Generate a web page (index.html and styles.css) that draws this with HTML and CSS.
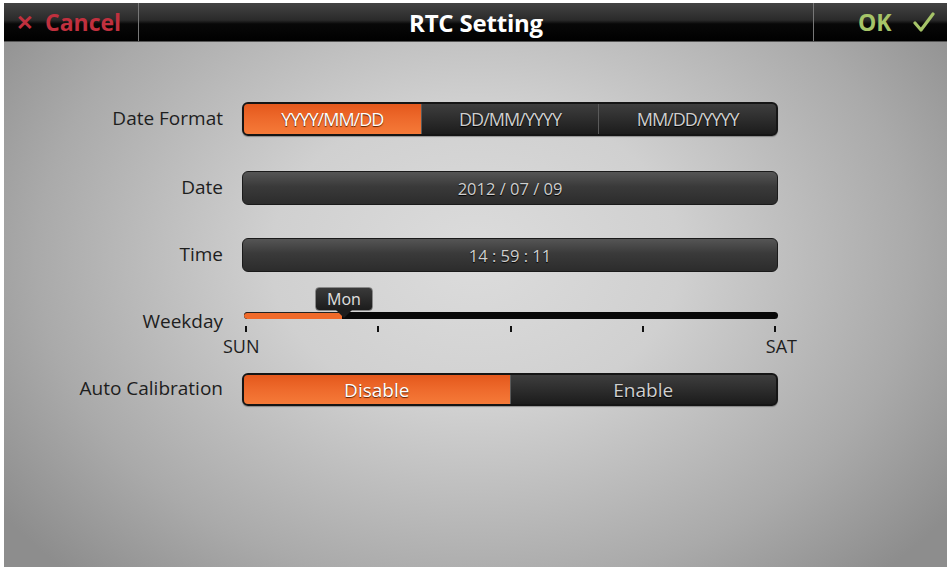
FILE: index.html
```html
<!DOCTYPE html>
<html>
<head>
<meta charset="utf-8">
<link rel="stylesheet" href="styles.css">
</head>
<body>
<div class="screen">
  <div class="header">
    <div class="hbtn cancel"><span class="x">✕</span> Cancel</div>
    <div class="title">RTC Setting</div>
    <div class="hbtn ok">OK <svg class="check" width="22" height="20" viewBox="0 0 22 20"><path d="M2 11 L8 18 L20 2" fill="none" stroke="#a6c468" stroke-width="3.2" stroke-linecap="round" stroke-linejoin="round"/></svg></div>
  </div>
  <div class="body">
    <div class="row r1">
      <div class="label">Date Format</div>
      <div class="seg three">
        <div class="opt on">YYYY/MM/DD</div>
        <div class="opt">DD/MM/YYYY</div>
        <div class="opt">MM/DD/YYYY</div>
      </div>
    </div>
    <div class="row r2">
      <div class="label">Date</div>
      <div class="field">2012 / 07 / 09</div>
    </div>
    <div class="row r3">
      <div class="label">Time</div>
      <div class="field">14 : 59 : 11</div>
    </div>
    <div class="row wk">
      <div class="label wklabel">Weekday</div>
      <div class="slider">
        <div class="tipzone">
          <div class="tip">Mon<span class="ptr"></span></div>
        </div>
        <div class="track"><div class="fill" style="width:98px"></div></div>
        <div class="ticks"><i></i><i></i><i></i><i></i><i></i></div>
        <div class="ends"><span>SUN</span><span>SAT</span></div>
      </div>
    </div>
    <div class="row r5">
      <div class="label">Auto Calibration</div>
      <div class="seg two">
        <div class="opt on">Disable</div>
        <div class="opt">Enable</div>
      </div>
    </div>
  </div>
</div>
</body>
</html>
```
FILE: styles.css
```css
html, body { margin: 0; padding: 0; background: #fff; }
body { font-family: "Open Sans", "Noto Sans", sans-serif; }
.screen {
  margin: 3px 0 0 4px;
  width: 943px;
  height: 564px;
  display: flex;
  flex-direction: column;
  background: radial-gradient(ellipse 62% 78% at 50% 45%, #dcdcdc 0%, #d0d0d0 35%, #aaaaaa 75%, #8d8d8d 100%);
}
.header {
  height: 38px;
  display: flex;
  align-items: stretch;
  background: linear-gradient(#444 0%, #2a2a2a 45%, #080808 55%, #000 100%);
  border-bottom: 1px solid #555;
}
.hbtn {
  display: flex;
  align-items: center;
  font-weight: 700;
  font-size: 23px;
}
.cancel {
  width: 135px;
  border-right: 1px solid #777;
  color: #c0303e;
  padding-left: 12px;
  box-sizing: border-box;
}
.cancel .x { font-size: 21px; margin-right: 11px; font-weight: 700; }
.title {
  flex: 1;
  display: flex;
  align-items: center;
  justify-content: center;
  color: #fff;
  font-weight: 700;
  font-size: 24px;
  letter-spacing: -0.2px;
}
.ok {
  width: 134px;
  border-left: 1px solid #777;
  color: #a6c468;
  padding-left: 44px;
  box-sizing: border-box;
}
.check { margin-left: 21px; }
.body { display: flex; flex-direction: column; }
.row {
  display: grid;
  grid-template-columns: 219px 536px;
  column-gap: 19px;
  align-items: center;
}
.label {
  text-align: right;
  font-size: 19px;
  color: #1e1e1e;
  padding-bottom: 3px;
}
.r1 { margin-top: 60px; height: 34px; }
.r2 { margin-top: 35px; height: 34px; }
.r3 { margin-top: 33px; height: 34px; }
.wk { margin-top: 14px; height: 74px; align-items: start; }
.r5 { margin-top: 13px; height: 33px; }
.seg {
  height: 100%;
  box-sizing: border-box;
  display: flex;
  border: 2px solid #151515;
  border-radius: 6px;
  overflow: hidden;
  background: linear-gradient(#3e3e3e, #1c1c1c);
  box-shadow: 0 1px 1px rgba(0,0,0,0.3);
}
.opt {
  flex: 1;
  display: flex;
  align-items: center;
  justify-content: center;
  color: #cfcfcf;
  font-size: 18px;
  letter-spacing: -1px;
  border-left: 1px solid #5a5a5a;
  text-shadow: 0 1px 1px #000;
}
.opt:first-child { border-left: none; }
.opt.on {
  background: linear-gradient(#e4581c 0%, #ee6a2c 50%, #f57a38 100%);
  color: #fff;
  text-shadow: 0 1px 1px #5a2000;
}
.two .opt { font-size: 19px; letter-spacing: 0; }
.field {
  height: 100%;
  box-sizing: border-box;
  border: 1px solid #1a1a1a;
  border-radius: 6px;
  background: linear-gradient(#555 0%, #3a3a3a 45%, #2c2c2c 100%);
  color: #cfcfcf;
  font-size: 16.5px;
  display: flex;
  align-items: center;
  justify-content: center;
  text-shadow: 0 1px 1px #000;
}
.wklabel { margin-top: 22px; padding-bottom: 0; }
.slider { display: flex; flex-direction: column; }
.tipzone { height: 26px; position: relative; }
.tip {
  position: absolute;
  left: 73px;
  top: 1px;
  width: 58px;
  height: 24px;
  box-sizing: border-box;
  background: linear-gradient(#3a3a3a, #1c1c1c);
  border: 1px solid #888;
  border-radius: 4px;
  color: #e0e0e0;
  font-size: 16px;
  display: flex;
  align-items: center;
  justify-content: center;
  z-index: 2;
}
.ptr {
  position: absolute;
  left: 20px;
  bottom: -8px;
  width: 0; height: 0;
  border-left: 8px solid transparent;
  border-right: 8px solid transparent;
  border-top: 8px solid #1c1c1c;
}
.track {
  height: 7px;
  margin-left: 2px;
  background: #080808;
  border-radius: 4px;
  position: relative;
  overflow: hidden;
}
.fill {
  height: 100%;
  background: #f06a2a;
  border-radius: 4px 0 0 4px;
  border-top: 1px solid #222;
  box-sizing: border-box;
}
.ticks {
  display: flex;
  justify-content: space-between;
  padding: 0 2px 0 3px;
  margin-top: 7px;
}
.ticks i { display: block; width: 2px; height: 6px; background: #111; }
.ends {
  display: flex;
  justify-content: space-between;
  margin: 2px -19px 0 -19px;
  font-size: 18px;
  color: #1e1e1e;
}
```
